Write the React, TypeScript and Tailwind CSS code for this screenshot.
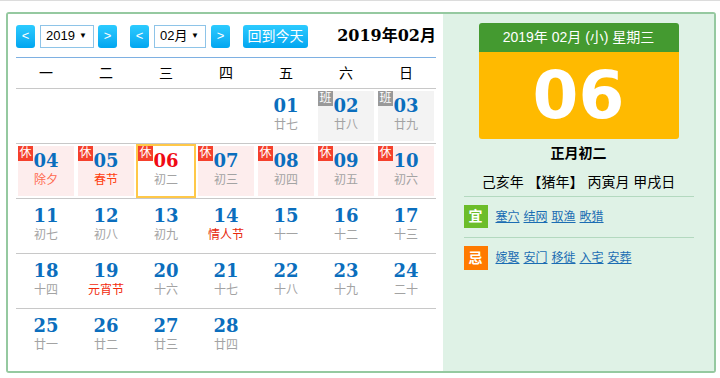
import React from 'react'

type Day = {
  d: string
  lunar: string
  tag?: '休' | '班'
  fest?: string
  today?: boolean
}

const sans = { fontFamily: '"Liberation Sans", "Noto Sans CJK SC", sans-serif' }
const serif = { fontFamily: '"DejaVu Serif", "Noto Sans CJK SC", serif' }

const weeks: (Day | null)[][] = [
  [null, null, null, null, { d: '01', lunar: '廿七' }, { d: '02', lunar: '廿八', tag: '班' }, { d: '03', lunar: '廿九', tag: '班' }],
  [
    { d: '04', lunar: '除夕', tag: '休', fest: 'text-[#ff6a4d]' },
    { d: '05', lunar: '春节', tag: '休', fest: 'text-[#ff3d0f]' },
    { d: '06', lunar: '初二', tag: '休', today: true },
    { d: '07', lunar: '初三', tag: '休' },
    { d: '08', lunar: '初四', tag: '休' },
    { d: '09', lunar: '初五', tag: '休' },
    { d: '10', lunar: '初六', tag: '休' },
  ],
  [
    { d: '11', lunar: '初七' },
    { d: '12', lunar: '初八' },
    { d: '13', lunar: '初九' },
    { d: '14', lunar: '情人节', fest: 'text-[#e8280c]' },
    { d: '15', lunar: '十一' },
    { d: '16', lunar: '十二' },
    { d: '17', lunar: '十三' },
  ],
  [
    { d: '18', lunar: '十四' },
    { d: '19', lunar: '元宵节', fest: 'text-[#f22a0c]' },
    { d: '20', lunar: '十六' },
    { d: '21', lunar: '十七' },
    { d: '22', lunar: '十八' },
    { d: '23', lunar: '十九' },
    { d: '24', lunar: '二十' },
  ],
  [{ d: '25', lunar: '廿一' }, { d: '26', lunar: '廿二' }, { d: '27', lunar: '廿三' }, { d: '28', lunar: '廿四' }, null, null, null],
]

function NavBtn({ label, className = '' }: { label: string; className?: string }) {
  return (
    <div className={`w-[19px] h-[23px] rounded-[3px] bg-gradient-to-b from-[#2bcbff] to-[#00a6f0] text-white text-[13px] flex items-center justify-center ${className}`}>
      {label}
    </div>
  )
}

function FakeSelect({ value, w }: { value: string; w: string }) {
  return (
    <div className={`${w} h-[23px] border border-[#8ec4e8] bg-white flex items-center pl-[5px] pr-[6px] text-[13px] text-black`}>
      <span>{value}</span>
      <span className="ml-auto text-[8px]">▼</span>
    </div>
  )
}

function Cell({ day }: { day: Day | null }) {
  if (!day) return <div className="h-[54px]" />
  const bg = day.today ? 'bg-white' : day.tag === '休' ? 'bg-[#fdeded]' : day.tag === '班' ? 'bg-[#f3f3f3]' : 'bg-white'
  return (
    <div className={`h-[54px] ${day.today ? 'border-2 border-[#ffc848]' : 'p-[2px]'}`}>
      <div className={`relative h-full ${bg} flex flex-col items-center pt-[4px]`}>
        {day.tag && (
          <span
            className={`absolute top-0 left-0 w-[15px] h-[15px] text-white text-[12px] leading-[15px] text-center ${day.tag === '休' ? 'bg-[#f5402c]' : 'bg-[#999999]'}`}
            style={sans}
          >
            {day.tag}
          </span>
        )}
        <span className={`text-[18px] leading-[22px] font-bold ${day.today ? 'text-[#f00a14]' : 'text-[#0b6ebd]'}`} style={serif}>
          {day.d}
        </span>
        <span className={`text-[12px] leading-[16px] ${day.fest ?? 'text-[#a3a3a3]'}`} style={sans}>
          {day.lunar}
        </span>
      </div>
    </div>
  )
}

export default function App() {
  return (
    <div className="min-h-screen bg-white border-t border-[#dcdcdc] pt-[11px] pl-[6px]" style={sans}>
      <div className="w-[710px] h-[361px] border-2 border-[#95c9a0] rounded-[3px] flex overflow-hidden">
        <div className="w-[435px] bg-white pl-2 pr-[7px] pt-[10px]">
          <div className="h-[34px] border-b border-[#7eb0e2] flex items-start">
            <div className="h-[24px] w-full flex items-center">
              <NavBtn label="<" />
              <FakeSelect value="2019" w="w-[54px] ml-[5px]" />
              <NavBtn label=">" className="ml-[4px]" />
              <NavBtn label="<" className="ml-[13px]" />
              <FakeSelect value="02月" w="w-[52px] ml-[5px]" />
              <NavBtn label=">" className="ml-[5px]" />
              <div className="ml-[13px] w-[65px] h-[23px] rounded-[3px] bg-gradient-to-b from-[#2bcbff] to-[#00a6f0] text-white text-[14px] flex items-center justify-center">
                回到今天
              </div>
              <div className="ml-auto text-[16px] font-bold text-black" style={serif}>
                2019年02月
              </div>
            </div>
          </div>
          <div className="grid grid-cols-7 h-[31px] border-b border-[#c8c8c8] items-center text-[14px] text-black">
            {['一', '二', '三', '四', '五', '六', '日'].map((w) => (
              <div key={w} className="text-center">
                {w}
              </div>
            ))}
          </div>
          {weeks.map((week, i) => (
            <div key={i} className={`grid grid-cols-7 ${i < weeks.length - 1 ? 'border-b border-[#c8c8c8]' : ''}`}>
              {week.map((day, j) => (
                <Cell key={j} day={day} />
              ))}
            </div>
          ))}
        </div>

        <div className="flex-1 bg-[#dff2e6] pt-[9px] flex flex-col items-center">
          <div className="w-[200px] rounded-[3px] overflow-hidden">
            <div className="h-[29px] bg-[#449a30] text-white text-[14px] flex items-center justify-center">
              2019年 02月 (小) 星期三
            </div>
            <div className="h-[87px] bg-[#ffba00] flex items-center justify-center">
              <span className="text-white font-bold text-[66px] leading-none" style={{ fontFamily: '"DejaVu Sans", sans-serif' }}>
                06
              </span>
            </div>
          </div>
          <div className="mt-[4px] text-[14px] leading-[20px] font-bold text-black">正月初二</div>
          <div className="mt-[9px] text-[14px] leading-[20px] text-black">己亥年 【猪年】 丙寅月 甲戌日</div>
          <div className="w-[230px] mt-[4px] border-t border-[#b3d9bf]">
            <div className="flex items-center mt-[8px] h-[23px]">
              <span className="w-[24px] h-[23px] bg-[#6cbd2a] text-white text-[14px] font-bold flex items-center justify-center">宜</span>
              <div className="ml-[8px] flex gap-[4px] text-[12px] text-[#1b6db3] underline">
                {['塞穴', '结网', '取渔', '畋猎'].map((t) => (
                  <span key={t}>{t}</span>
                ))}
              </div>
            </div>
            <div className="mt-[9px] border-t border-[#b3d9bf]" />
            <div className="flex items-center mt-[8px] h-[24px]">
              <span className="w-[24px] h-[24px] bg-[#ff7a00] text-white text-[14px] font-bold flex items-center justify-center">忌</span>
              <div className="ml-[8px] flex gap-[4px] text-[12px] text-[#1b6db3] underline">
                {['嫁娶', '安门', '移徙', '入宅', '安葬'].map((t) => (
                  <span key={t}>{t}</span>
                ))}
              </div>
            </div>
          </div>
        </div>
      </div>
    </div>
  )
}
